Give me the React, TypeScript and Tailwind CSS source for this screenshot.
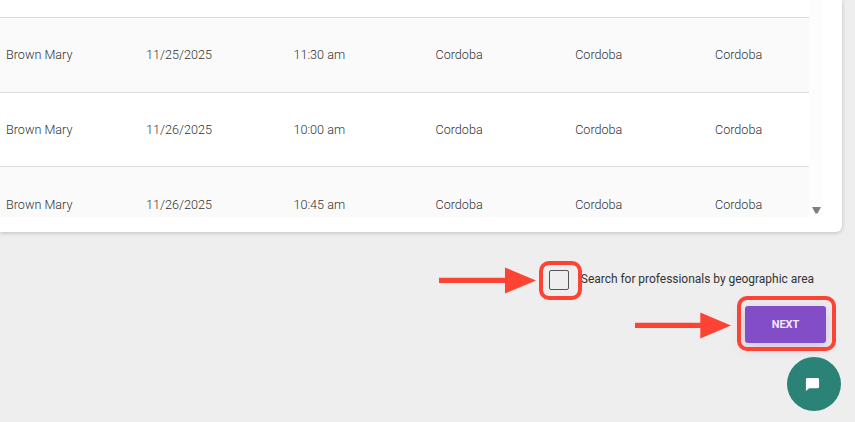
import React from "react";

const rows = [
  { name: "Brown Mary", date: "11/25/2025", time: "11:30 am", bg: "bg-[#fafafa]", h: "h-[75px]" },
  { name: "Brown Mary", date: "11/26/2025", time: "10:00 am", bg: "bg-white pt-[1px]", h: "h-[74px]" },
  { name: "Brown Mary", date: "11/26/2025", time: "10:45 am", bg: "bg-[#fafafa]", h: "h-[77px]" },
];

function Arrow({ className }: { className: string }) {
  return (
    <svg className={className} viewBox="0 0 100 28" preserveAspectRatio="none" fill="#fd4434">
      <path d="M0 11.2 L68 11.2 L68 0.5 L100 14 L68 27.5 L68 16.6 L0 16.6 Z" />
    </svg>
  );
}

export default function App() {
  return (
    <div className="relative h-[422px] w-[855px] overflow-hidden bg-[#eeeeee] font-['Roboto',sans-serif]">
      <div className="mr-[13px] h-[232px] rounded-br-[6px] bg-white shadow-[0_1px_4px_rgba(0,0,0,0.2)]">
        <div className="relative flex h-[217px] overflow-hidden">
          <div className="w-[809px] shrink-0">
            <div className="h-[18px] border-b border-[#dedede] bg-white" />
            {rows.map((r, i) => (
              <div
                key={i}
                className={`grid grid-cols-[146px_147.5px_142px_139.7px_139.8px_94px] items-center border-b border-[#dedede] text-[12.6px] font-light text-[#333333] ${r.bg} ${r.h}`}
              >
                <span className="pl-[6px]">{r.name}</span>
                <span>{r.date}</span>
                <span>{r.time}</span>
                <span>Cordoba</span>
                <span>Cordoba</span>
                <span>Cordoba</span>
              </div>
            ))}
          </div>
          <div className="flex w-[14px] shrink-0 items-end justify-center bg-[#fdfdfd] pb-[3px]">
            <svg width="9" height="7" viewBox="0 0 9 7" fill="#808080">
              <path d="M0 0 H9 L5.5 6.5 H3.5 Z" />
            </svg>
          </div>
        </div>
      </div>

      <div className="mt-[38px] flex items-center justify-end pr-[41px]">
        <div className="h-[20px] w-[20px] rounded-[2px] border border-[#555555]" />
        <span className="ml-[12px] pb-[1px] text-[12px] leading-[19px] tracking-[-0.03px] text-[#333333]">
          Search for professionals by geographic area
        </span>
      </div>

      <div className="mt-[16px] flex justify-end pr-[29px]">
        <button className="flex h-[37px] w-[81px] items-center justify-center rounded-[3px] bg-[#844dc8] pt-[1px] text-[11px] font-bold text-[#f3e9fb] shadow-[0_4px_14px_rgba(90,50,160,0.25)]">
          NEXT
        </button>
      </div>

      {/* Annotations */}
      <div className="absolute left-[539px] top-[261px] h-[39px] w-[43px] rounded-[10px] border-[4.5px] border-[#fd4434]" />
      <div className="absolute left-[737px] top-[296px] h-[55px] w-[99px] rounded-[10px] border-[4.5px] border-[#fd4434]" />
      <Arrow className="absolute left-[439px] top-[267px] h-[27px] w-[97px]" />
      <Arrow className="absolute left-[635px] top-[311.5px] h-[27px] w-[96px]" />

      {/* Chat button */}
      <button className="absolute left-[787px] top-[357px] flex h-[54px] w-[54px] items-center justify-center rounded-full bg-[#2b8276]">
        <svg className="mr-[4px]" width="15" height="15" viewBox="0 0 16 16" fill="#ffffff">
          <path d="M2.5 1 H13.5 A1.5 1.5 0 0 1 15 2.5 V10.5 A1.5 1.5 0 0 1 13.5 12 H4.5 L1 15 V2.5 A1.5 1.5 0 0 1 2.5 1 Z" />
        </svg>
      </button>
    </div>
  );
}
